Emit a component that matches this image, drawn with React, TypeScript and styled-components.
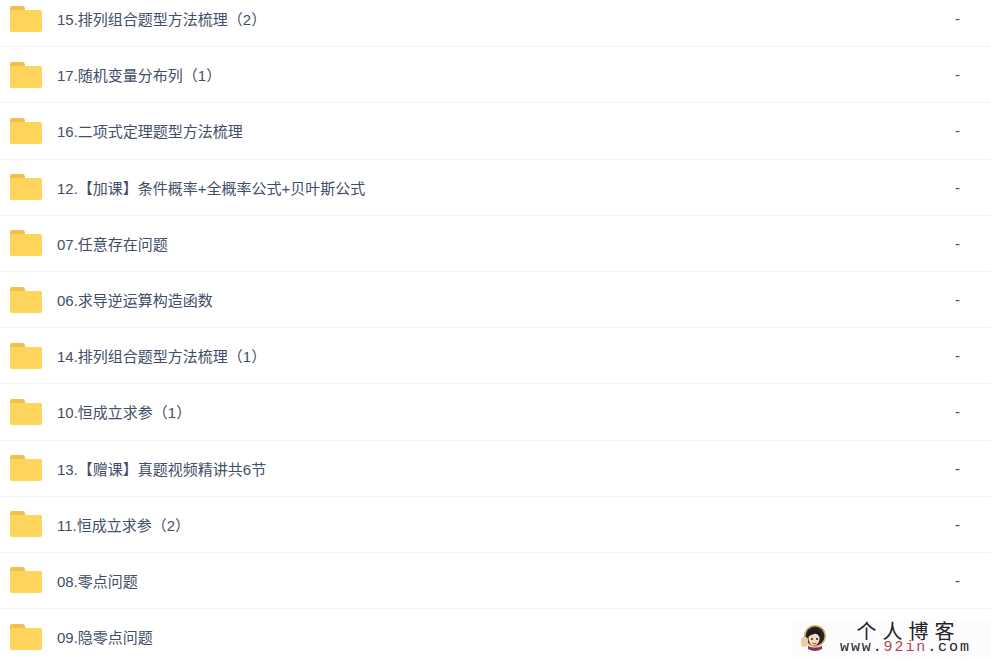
import styled, { createGlobalStyle } from "styled-components";

const rows = [
  { name: "15.排列组合题型方法梳理（2）", size: "-" },
  { name: "17.随机变量分布列（1）", size: "-" },
  { name: "16.二项式定理题型方法梳理", size: "-" },
  { name: "12.【加课】条件概率+全概率公式+贝叶斯公式", size: "-" },
  { name: "07.任意存在问题", size: "-" },
  { name: "06.求导逆运算构造函数", size: "-" },
  { name: "14.排列组合题型方法梳理（1）", size: "-" },
  { name: "10.恒成立求参（1）", size: "-" },
  { name: "13.【赠课】真题视频精讲共6节", size: "-" },
  { name: "11.恒成立求参（2）", size: "-" },
  { name: "08.零点问题", size: "-" },
  { name: "09.隐零点问题", size: "" },
];

function FolderIcon() {
  return (
    <svg width="32" height="26" viewBox="0 0 32 26">
      <path d="M0 2a2 2 0 0 1 2-2h10a3 3 0 0 1 3 3v4H0z" fill="#f0c14f" />
      <rect x="0" y="4" width="32" height="22" rx="2" fill="#ffd45c" />
    </svg>
  );
}

function Watermark() {
  return (
    <Mark>
      <svg width="26" height="28" viewBox="0 0 26 28">
        <circle cx="14" cy="12" r="11" fill="#d8b45a" />
        <circle cx="14" cy="12" r="9.5" fill="#2b2430" />
        <ellipse cx="13" cy="15" rx="5.5" ry="6.5" fill="#f4dcc0" />
        <path d="M6 13q2-9 8-8t7 9q-5-5-8-4t-7 3z" fill="#1d1a22" />
        <circle cx="11" cy="15" r="1" fill="#222" />
        <circle cx="16" cy="15" r="1" fill="#222" />
        <path d="M11.500 19q2 1.500 4 0" stroke="#a33" fill="none" />
        <rect x="0" y="13" width="7" height="10" rx="3" fill="#eccfa6" />
        <path d="M7 22q7 3 14 0v3q-7 4-14 0z" fill="#8c2f56" />
      </svg>
      <MarkText>
        <MarkTitle>个人博客</MarkTitle>
        <MarkUrl>
          www.<Red>92in</Red>.com
        </MarkUrl>
      </MarkText>
    </Mark>
  );
}

export default function App() {
  return (
    <>
      <GlobalStyle />
      <Page>
        <List>
          {rows.map((row) => (
            <Row key={row.name}>
              <FolderIcon />
              <Name>{row.name}</Name>
              <Size>{row.size}</Size>
            </Row>
          ))}
        </List>
        <Watermark />
      </Page>
    </>
  );
}

const GlobalStyle = createGlobalStyle`
  html, body {
    margin: 0;
    background: #fff;
    overflow: hidden;
  }
`;

const Page = styled.div`
  position: relative;
  width: 991px;
  height: 660px;
  overflow: hidden;
`;

const List = styled.div`
  margin-top: -9px;
`;

const Row = styled.div`
  box-sizing: border-box;
  display: flex;
  align-items: center;
  height: 56.2px;
  padding-left: 10px;
  border-bottom: 1px solid #f2f3f8;
`;

const Name = styled.span`
  flex: 1;
  margin-left: 15px;
  font: 15px "Liberation Sans", "Noto Sans CJK SC", sans-serif;
  color: #424e67;
`;

const Size = styled.span`
  width: 36px;
  font: 15px "Liberation Sans", sans-serif;
  color: #424e67;
`;

const Mark = styled.div`
  position: absolute;
  left: 793px;
  top: 619px;
  width: 198px;
  height: 38px;
  display: flex;
  align-items: center;
  padding-left: 8px;
  box-sizing: border-box;
  gap: 13px;
  background: #fcfcfe;
`;

const MarkText = styled.div`
  display: flex;
  flex-direction: column;
  align-items: center;
`;

const MarkTitle = styled.div`
  font: 20px/18px "Noto Sans CJK SC", sans-serif;
  letter-spacing: 6px;
  margin-right: -6px;
  color: #222;
`;

const MarkUrl = styled.div`
  font: 15px/15px "Liberation Mono", monospace;
  letter-spacing: 1.9px;
  color: #222;
`;

const Red = styled.span`
  color: #b5474a;
`;
